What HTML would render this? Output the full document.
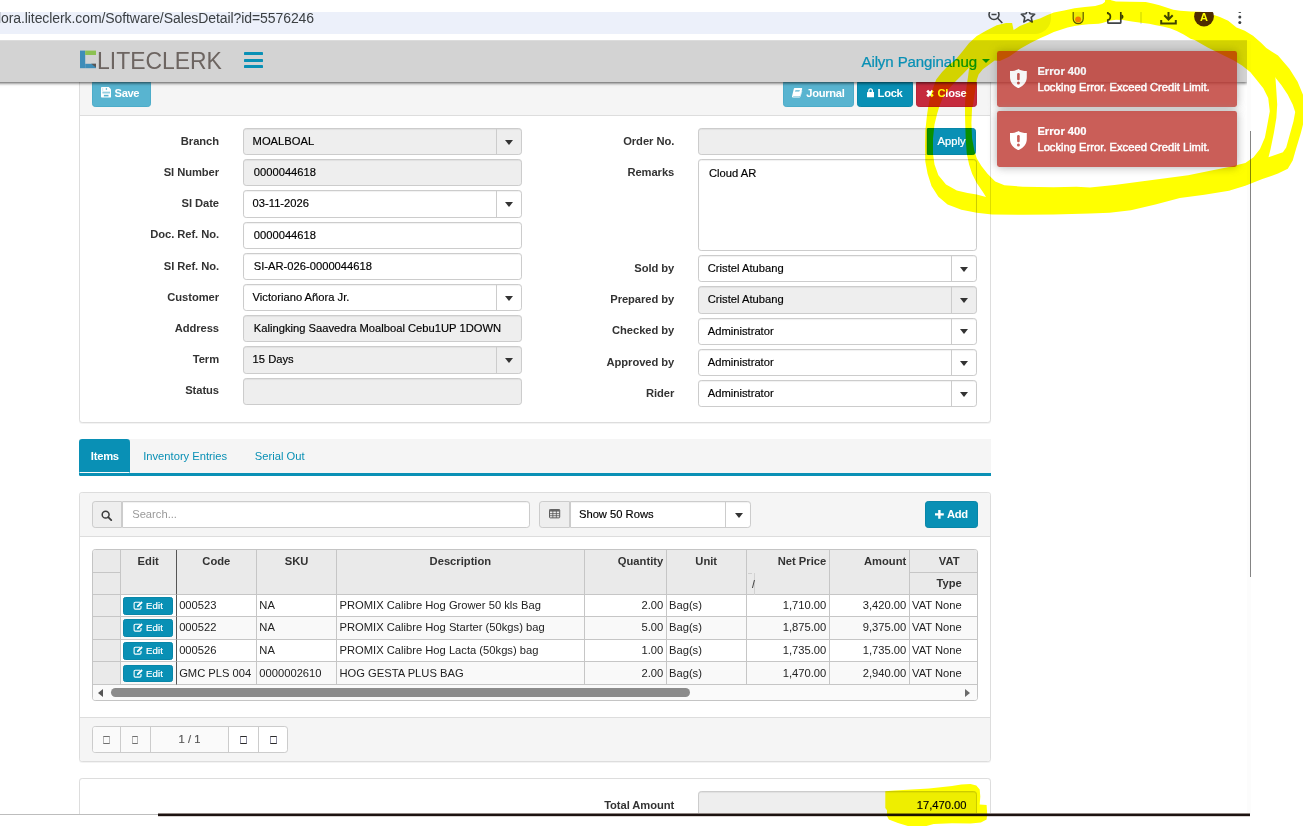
<!DOCTYPE html>
<html lang="en">
<head>
<meta charset="utf-8">
<title>Sales Detail</title>
<style>
*{box-sizing:border-box}
html,body{margin:0;padding:0;background:#fff}
body{width:1303px;height:826px;position:relative;overflow:hidden;font-family:"Liberation Sans",sans-serif}
/* ---------- browser chrome strip ---------- */
#chrome{position:absolute;left:0;top:0;width:1303px;height:41px;background:#fff;overflow:hidden}
#pill{position:absolute;left:-30px;top:12px;width:1081px;height:22px;background:#ecf0fa;border-radius:0 0 16px 0}
#url{position:absolute;left:-2px;top:9px;font-size:14px;line-height:18px;color:#3c4043;white-space:nowrap;letter-spacing:-.085px}
#chrome svg{position:absolute;overflow:visible}
/* ---------- app (80% zoom) ---------- */
#clip{position:absolute;z-index:0;left:0;top:41px;width:1247px;height:773px;overflow:hidden;background:#fff}
#app{zoom:.8;position:absolute;left:0;top:0;width:1558.75px;height:967px;font-size:14px;line-height:1.42857;color:#333}
#nav{position:absolute;left:-20px;top:0;width:1578.75px;height:51px;background:#d3d3d3;box-shadow:0 1px 4px rgba(0,0,0,.7);z-index:5}
#logo{position:absolute;left:119.5px;top:10.5px;height:26px}
#brand{position:absolute;left:141px;top:4.5px;font-size:31px;line-height:40px;color:#6d6561;letter-spacing:0;-webkit-text-stroke:.9px #d3d3d3;paint-order:stroke fill;white-space:nowrap;transform-origin:0 50%;transform:scaleX(.925)}
#bars{position:absolute;left:324.5px;top:14px;width:24.5px}
#bars i{display:block;height:4px;background:#0990b5;margin-bottom:4px;border-radius:.5px}
#user{position:absolute;right:337.6px;top:14px;font-size:18.8px;line-height:26px;color:#0990b5;white-space:nowrap;-webkit-text-stroke:.3px #0990b5;letter-spacing:-.12px}
#caret{position:absolute;left:1247.1px;top:22.5px;width:0;height:0;border:5.3px solid transparent;border-top:6.1px solid #0990b5;border-bottom:0}
.wrap{position:absolute;left:98.75px;width:1140px}
.panel{background:#fff;border:1px solid #ddd;border-radius:4px;box-shadow:0 1px 1px rgba(0,0,0,.05)}
.ph{background:#f5f5f5;border-bottom:1px solid #ddd;padding:10px 15px;height:55px;border-radius:3px 3px 0 0;position:relative}
.pf{background:#f5f5f5;border-top:1px solid #ddd;padding:10px 15px;height:55px;border-radius:0 0 3px 3px}
.btn{display:inline-block;height:34px;padding:5px 12px 7px;font-size:14px;line-height:20px;font-weight:bold;color:#fff;border:1px solid transparent;border-radius:4px;white-space:nowrap;vertical-align:top}
.btn svg{display:inline-block;vertical-align:-1px;margin-right:1px}
.b-info{background:#58b4d0;border-color:#4cacc9}
.b-pri{background:#0990b5;border-color:#0886a8}
.b-dan{background:#c52a3d;border-color:#b82438}
.right{position:absolute;right:15px;top:10px}
.right .btn{margin-left:4px;padding-left:0;padding-right:0;text-align:center;letter-spacing:-.4px}
/* form */
.col{position:absolute;top:15px;width:569px}
.fg{height:34px;margin-bottom:5px;position:relative}
.fg label{position:absolute;left:0;top:0;width:173.8px;padding-top:6px;text-align:right;font-weight:bold;line-height:20px;letter-spacing:-.08px;white-space:nowrap}
.fc{position:absolute;left:204px;top:0;width:348.4px;height:34px;border:1px solid #ccc;border-radius:4px;background:#fff;box-shadow:inset 0 1px 1px rgba(0,0,0,.075);padding:5px 12px 7px;line-height:20px;color:#000;-webkit-text-stroke:.2px #000;white-space:nowrap;overflow:hidden}
.fc.dis{background:#eee}
.fc.cb{padding-right:44px;padding-left:10.5px}
.fc.cb:after{content:"";position:absolute;right:0;top:0;width:30.5px;height:32px;border-left:1px solid #ccc}
.fc.cb:before{content:"";position:absolute;right:9.7px;top:13.5px;border:5.3px solid transparent;border-top:6.3px solid #333;border-bottom:0}

/* tabs */
#tabs{top:497.5px;height:46.4px;background:#f5f5f5}
#tabs:after{content:"";position:absolute;left:0;top:42.2px;width:100%;height:4.300px;background:#0990b5;border-radius:0 0 0 2px}
#tabs span{position:absolute;top:0;height:42.5px;padding:10px 15px;line-height:20px;border:1px solid transparent;color:#0990b5;white-space:nowrap}
#tabs span.act{left:0;width:63.5px;padding-left:13.5px;padding-right:0;background:#0990b5;color:#fff;font-weight:bold;border-radius:4px 4px 0 0;border-bottom-color:#fafafa;letter-spacing:-.3px}
/* panel 2 */
.ig{position:absolute;top:10px;height:34px}
.ad{position:absolute;left:0;top:0;height:34px;width:38px;background:#eee;border:1px solid #ccc;border-radius:4px 0 0 4px}
.ad svg{position:absolute;left:10.500px;top:10px}
.ig .fc{left:37px;border-radius:0 4px 4px 0}
#grid{position:absolute;left:15px;top:15px;width:1108px;height:190px;border:1px solid #c4c4c4;border-radius:4px;overflow:hidden;background:#fff;color:#222}
#grid .c{position:absolute;height:28px;border-right:1px solid #c6c6c6;border-bottom:1px solid #c6c6c6;padding:3px;line-height:21px;white-space:nowrap;overflow:hidden}
#grid .h{background:#eaeaea;font-weight:bold;text-align:center;color:#333}
#grid .r{text-align:right}
#grid .alt{background:#f9f9f9}
#grid .eb{display:block;height:22px;background:#0990b5;border:1px solid #0886a8;border-radius:3px;color:#fff;font-size:12px;line-height:19px;text-align:center;letter-spacing:.15px;-webkit-text-stroke:.25px #fff;padding-right:0}
#grid .eb svg{vertical-align:-1px;margin-right:3px}
#sb{position:absolute;left:0;top:168.5px;width:1106px;height:20px;background:#fafafa}
#sb i{position:absolute;left:23px;top:4px;width:723px;height:11px;border-radius:6px;background:#8b8b8b}
#sb:before{content:"";position:absolute;left:6px;top:4.500px;border:5.500px solid transparent;border-right:7px solid #555;border-left:0}
#sb:after{content:"";position:absolute;right:10px;top:4.500px;border:5.500px solid transparent;border-left:7px solid #6a6a6a;border-right:0}
.pg{position:absolute;left:15px;top:10px;height:34px;width:245px;border:1px solid #ccc;border-radius:4px;background:#fff;overflow:hidden}
.pg span{position:absolute;top:0;height:32px;border-right:1px solid #ccc;text-align:center;line-height:32px;color:#555}
.pg span.d{background:#fafafa;color:#555;-webkit-text-stroke:.2px #555}
.pg i{display:inline-block;width:8px;height:10px;border:1px solid;border-color:#2a2a2a #8c8ca0;vertical-align:-1px}
.pg .d i{border-color:#707070 #b4b4b4}
/* toasts */
.toast{position:absolute;right:12px;width:300px;height:70px;-webkit-text-stroke:.3px #fff;background:#bd362f;opacity:.8;border-radius:3px;box-shadow:0 0 12px #999;color:#fff;padding:15px 15px 15px 50px;line-height:20px;z-index:9;white-space:nowrap}
.toast b{display:block}
.toast span{-webkit-text-stroke:.55px #fff}
.toast+.toast svg{top:24px}
.toast svg{position:absolute;left:15.5px;top:22.5px}
</style>
</head>
<body>
<div id="chrome">
  <div id="pill"></div>

  <svg style="left:0;top:0" width="1303" height="41" viewBox="0 0 1303 41"><g fill="none" stroke="#3f4346" stroke-width="1.600">
    <circle cx="994" cy="14.500" r="5"/><path d="M991.500 14.500h5M997.700 18.200l4.600 4.800" />
    <path d="M1028 9.400l2 4.300 4.700.5-3.500 3.200 1 4.600-4.200-2.400-4.200 2.400 1-4.600-3.500-3.200 4.700-.5z" stroke-linejoin="round"/>
    <path d="M1073.200 9v9.700a5 5 0 0 0 10 0V9" stroke="#5a5a50" stroke-width="1.200" fill="#ececec"/>
    <path d="M1107.800 10v3.400c1.600.3 2.600 1.500 2.600 3.300s-1 3-2.600 3.300v2.200c0 .6.400 1 1 1h11c.6 0 1-.4 1-1V10" stroke-width="1.700"/><path d="M1121.300 14.600a2.200 2.200 0 0 1 0 4.400z" fill="#3f4346" stroke="none"/>
    <path d="M1168.500 9v10M1164.300 15.300l4.200 4.200 4.200-4.200M1161.200 20v3.500h14.600V20" stroke-width="2"/>
  </g>
  <circle cx="1078.100" cy="19.400" r="3" fill="#f57c00"/>
  <rect x="1140.500" y="12" width="1" height="12" fill="#c9d4ea"/>
  <circle cx="1204" cy="16.600" r="9.900" fill="#4e2c05"/>
  <text x="1204" y="20.500" text-anchor="middle" font-family="Liberation Sans, sans-serif" font-weight="bold" font-size="11" fill="#fff">A</text>
  <circle cx="1239.800" cy="11.600" r="1.500" fill="#3f4346"/><circle cx="1239.800" cy="17" r="1.500" fill="#3f4346"/><circle cx="1239.800" cy="22.400" r="1.500" fill="#3f4346"/>
  <rect x="985" y="0" width="280" height="12" fill="#fff"/>
  </svg>
  <div style="position:absolute;left:0;top:40px;width:1247px;height:1px;background:#dcdcdc"></div>
  <div id="url">lora.liteclerk.com/Software/SalesDetail?id=5576246</div>
</div>

<div id="clip"><div id="app">
  <div id="nav">
    <svg id="logo" viewBox="0 0 21 26" width="21" height="26"><rect x="0" y="2" width="6.5" height="22" fill="#3f8db8"/><rect x="6.5" y="2" width="14.5" height="5.5" fill="#8cc152"/><path d="M6.5 18.5H21V24H6.5z" fill="#3f8db8"/><path d="M21 18.5V24L14 18.5z" fill="#5b5552"/></svg>
    <div id="brand">LITECLERK</div>
    <div id="bars"><i></i><i></i><i></i></div>
    <div id="user">Ailyn Panginahug</div><div id="caret"></div>
  </div>

  <!-- PANEL 1 -->
  <div class="wrap panel" id="p1" style="top:37.5px;height:439.5px">
    <div class="ph">
      <span class="btn b-info" style="width:73.7px;padding-left:0;padding-right:4px;text-align:center;letter-spacing:-.55px"><svg width="13" height="13" viewBox="0 0 13 13"><path fill="#fff" d="M.9 0h8.800L13 3.300v8.800c0 .5-.4.900-.9.900H.9c-.5 0-.9-.4-.9-.9V.9C0 .4.400 0 .9 0z"/><rect x="1.700" y="5.800" width="9.600" height="2.300" fill="#58b4d0" opacity=".65"/><rect x="3.600" y="9.800" width="5.800" height="2" fill="#58b4d0"/><rect x="6" y="1.200" width="1.600" height="2.600" fill="#58b4d0" opacity=".8"/><rect x="1.700" y="1" width="1" height="4" fill="#58b4d0" opacity=".35"/></svg> Save</span>
      <div class="right" style="right:16.700px">
        <span class="btn b-info" style="width:88.4px"><svg width="13" height="12" viewBox="0 0 13 12"><path fill="#fff" d="M3.4 0h8.4c.7 0 1.1.6.9 1.3L10.400 9.300c-.2.7-.9 1.200-1.600 1.200H1.700c-.2 0-.3.100-.3.300 0 .3.300.4.600.4h7.400c.4 0 .700-.2.800-.6l2.300-7.600c.3.2.4.700.3 1.100L10.600 11c-.2.600-.8 1-1.400 1H1.600C.7 12 0 11.300 0 10.500c0-.3.100-.5.200-.8L2.300.9C2.500.3 2.900 0 3.400 0zm.9 2.600l-.2.700h5.500l.2-.7zm-.500 1.700l-.2.700h5.500l.2-.7z"/></svg> Journal</span><span class="btn b-pri" style="width:70px;margin-left:3.600px"><svg width="9" height="12" viewBox="0 0 9 12"><path fill="#fff" d="M1.500 5V3.500C1.500 1.600 2.800.3 4.500.3s3 1.300 3 3.200V5h.7c.4 0 .8.400.8.800v5c0 .5-.4.900-.8.900H.8c-.4 0-.8-.4-.8-.9v-5c0-.4.400-.8.800-.8zm1.600 0h2.800V3.500c0-1-.6-1.600-1.400-1.600s-1.400.6-1.400 1.600z"/></svg> Lock</span><span class="btn b-dan" style="width:76px"><svg width="10" height="11" viewBox="0 0 10 11"><path stroke="#fff" stroke-width="3.300" d="M1.500 2l7 7M8.500 2l-7 7"/></svg> Close</span>
      </div>
    </div>
    <div id="body1" style="position:relative">
      <div class="col" style="left:0">
        <div class="fg"><label>Branch</label><div class="fc dis cb">MOALBOAL</div></div>
        <div class="fg"><label>SI Number</label><div class="fc dis">0000044618</div></div>
        <div class="fg"><label>SI Date</label><div class="fc cb">03-11-2026</div></div>
        <div class="fg"><label>Doc. Ref. No.</label><div class="fc">0000044618</div></div>
        <div class="fg"><label>SI Ref. No.</label><div class="fc">SI-AR-026-0000044618</div></div>
        <div class="fg"><label>Customer</label><div class="fc cb">Victoriano Añora Jr.</div></div>
        <div class="fg"><label>Address</label><div class="fc dis">Kalingking Saavedra Moalboal Cebu1UP 1DOWN</div></div>
        <div class="fg"><label>Term</label><div class="fc dis cb">15 Days</div></div>
        <div class="fg"><label>Status</label><div class="fc dis"></div></div>
      </div>
      <div class="col" style="left:569px">
        <div class="fg"><label>Order No.</label><div class="fc dis" style="border-radius:4px 0 0 4px;width:285.500px"></div><span class="btn b-pri" style="position:absolute;right:17.500px;top:0;width:62px;text-align:center;border-radius:0 4px 4px 0;font-weight:normal;-webkit-text-stroke:.3px #fff;padding:5px 0 7px">Apply</span></div>
        <div class="fg" style="height:115px"><label>Remarks</label><div class="fc" style="height:115px;padding-top:6.500px">Cloud AR</div></div>
        <div class="fg"><label>Sold by</label><div class="fc cb">Cristel Atubang</div></div>
        <div class="fg"><label>Prepared by</label><div class="fc dis cb">Cristel Atubang</div></div>
        <div class="fg"><label>Checked by</label><div class="fc cb">Administrator</div></div>
        <div class="fg"><label>Approved by</label><div class="fc cb">Administrator</div></div>
        <div class="fg"><label>Rider</label><div class="fc cb">Administrator</div></div>
      </div>
    </div>
  </div>

  <!-- TABS -->
  <div class="wrap" id="tabs"><span class="act">Items</span><span style="left:64px">Inventory Entries</span><span style="left:203.500px">Serial Out</span></div>

  <!-- PANEL 2 -->
  <div class="wrap panel" id="p2" style="top:564px;height:337px">
    <div class="ph">
      <div class="ig" style="left:15px;width:547px"><div class="ad"><svg width="14" height="14" viewBox="0 0 14 14"><circle cx="5.800" cy="5.800" r="4.300" fill="none" stroke="#3c3c3c" stroke-width="1.900"/><path d="M9 9l3.800 3.800" stroke="#3c3c3c" stroke-width="2.200" stroke-linecap="round"/></svg></div><div class="fc" style="width:510px;color:#999;-webkit-text-stroke:0">Search...</div></div>
      <div class="ig" style="left:574px;width:266px"><div class="ad" style="width:39px"><svg style="top:9px;left:11.500px" width="14" height="12" viewBox="0 0 14 12"><rect x=".6" y=".6" width="12.800" height="10.500" rx="1" fill="none" stroke="#555" stroke-width="1.200"/><rect x=".6" y=".6" width="12.800" height="2.600" fill="#666"/><path d="M.6 5.800h12.800M.6 8.400h12.800M4.800 2v9M9.200 2v9" stroke="#555" stroke-width="1"/></svg></div><div class="fc cb" style="left:38px;width:227.300px">Show 50 Rows</div></div>
      <div class="right"><span class="btn b-pri" style="padding:5px 0 7px;width:66.500px;text-align:center;letter-spacing:-.3px"><svg width="11" height="11" viewBox="0 0 11 11"><path d="M5.500 0v11M0 5.500h11" stroke="#fff" stroke-width="3"/></svg> Add</span></div>
    </div>
    <div style="position:relative;height:225px">
      <div id="grid">
        <div class="c h" style="left:0.0px;top:0px;width:34.5px;height:28.0px;"></div>
        <div class="c h" style="left:0.0px;top:28.0px;width:34.5px;height:27.5px;"></div>
        <div class="c h" style="left:34.5px;top:0px;width:70.2px;height:55.5px;border-right-color:#555;">Edit</div>
        <div class="c h" style="left:104.7px;top:0px;width:100.2px;height:55.5px;">Code</div>
        <div class="c h" style="left:204.9px;top:0px;width:100.2px;height:55.5px;">SKU</div>
        <div class="c h" style="left:305.1px;top:0px;width:309.5px;height:55.5px;">Description</div>
        <div class="c h r" style="left:614.6px;top:0px;width:102.4px;height:55.5px;">Quantity</div>
        <div class="c h" style="left:717.0px;top:0px;width:100.2px;height:55.5px;">Unit</div>
        <div class="c h r" style="left:817.2px;top:0px;width:103.6px;height:55.5px;">Net Price</div>
        <div class="c h r" style="left:920.8px;top:0px;width:100.0px;height:55.5px;">Amount</div>
        <div class="c h" style="left:1020.8px;top:0px;width:100.0px;height:28.0px;">VAT</div>
        <div class="c h" style="left:1020.8px;top:28.0px;width:100.0px;height:27.5px;">Type</div>
        <div class="c h" style="left:0.0px;top:55.5px;width:34.5px;height:27.5px;"></div>
        <div class="c " style="left:34.5px;top:55.5px;width:70.2px;height:27.5px;border-right-color:#555;"><span class="eb"><svg width="13" height="11" viewBox="0 0 12 11"><path d="M8.300 1.500H2.400C1.500 1.500.9 2.100.9 3v5.600c0 .9.600 1.500 1.500 1.500H8c.9 0 1.500-.6 1.500-1.500V6.400" fill="none" stroke="#fff" stroke-width="1.400"/><path d="M4.400 7.800l.4-2.200L10 .4l1.700 1.700-5.200 5.200z" fill="#fff"/></svg>Edit</span></div>
        <div class="c " style="left:104.7px;top:55.5px;width:100.2px;height:27.5px;">000523</div>
        <div class="c " style="left:204.9px;top:55.5px;width:100.2px;height:27.5px;">NA</div>
        <div class="c " style="left:305.1px;top:55.5px;width:309.5px;height:27.5px;">PROMIX Calibre Hog Grower 50 kls Bag</div>
        <div class="c r" style="left:614.6px;top:55.5px;width:102.4px;height:27.5px;">2.00</div>
        <div class="c " style="left:717.0px;top:55.5px;width:100.2px;height:27.5px;">Bag(s)</div>
        <div class="c r" style="left:817.2px;top:55.5px;width:103.6px;height:27.5px;">1,710.00</div>
        <div class="c r" style="left:920.8px;top:55.5px;width:100.0px;height:27.5px;">3,420.00</div>
        <div class="c " style="left:1020.8px;top:55.5px;width:100.0px;height:27.5px;">VAT None</div>
        <div class="c h" style="left:0.0px;top:83px;width:34.5px;height:29.2px;"></div>
        <div class="c alt" style="left:34.5px;top:83px;width:70.2px;height:29.2px;border-right-color:#555;"><span class="eb"><svg width="13" height="11" viewBox="0 0 12 11"><path d="M8.300 1.500H2.400C1.500 1.500.9 2.100.9 3v5.600c0 .9.600 1.500 1.500 1.500H8c.9 0 1.500-.6 1.500-1.500V6.400" fill="none" stroke="#fff" stroke-width="1.400"/><path d="M4.400 7.800l.4-2.200L10 .4l1.700 1.700-5.200 5.200z" fill="#fff"/></svg>Edit</span></div>
        <div class="c alt" style="left:104.7px;top:83px;width:100.2px;height:29.2px;">000522</div>
        <div class="c alt" style="left:204.9px;top:83px;width:100.2px;height:29.2px;">NA</div>
        <div class="c alt" style="left:305.1px;top:83px;width:309.5px;height:29.2px;">PROMIX Calibre Hog Starter (50kgs) bag</div>
        <div class="c r alt" style="left:614.6px;top:83px;width:102.4px;height:29.2px;">5.00</div>
        <div class="c alt" style="left:717.0px;top:83px;width:100.2px;height:29.2px;">Bag(s)</div>
        <div class="c r alt" style="left:817.2px;top:83px;width:103.6px;height:29.2px;">1,875.00</div>
        <div class="c r alt" style="left:920.8px;top:83px;width:100.0px;height:29.2px;">9,375.00</div>
        <div class="c alt" style="left:1020.8px;top:83px;width:100.0px;height:29.2px;">VAT None</div>
        <div class="c h" style="left:0.0px;top:112.2px;width:34.5px;height:28px;"></div>
        <div class="c " style="left:34.5px;top:112.2px;width:70.2px;height:28px;border-right-color:#555;"><span class="eb"><svg width="13" height="11" viewBox="0 0 12 11"><path d="M8.300 1.500H2.400C1.500 1.500.9 2.100.9 3v5.600c0 .9.600 1.500 1.500 1.500H8c.9 0 1.500-.6 1.500-1.500V6.400" fill="none" stroke="#fff" stroke-width="1.400"/><path d="M4.400 7.800l.4-2.200L10 .4l1.700 1.700-5.200 5.200z" fill="#fff"/></svg>Edit</span></div>
        <div class="c " style="left:104.7px;top:112.2px;width:100.2px;height:28px;">000526</div>
        <div class="c " style="left:204.9px;top:112.2px;width:100.2px;height:28px;">NA</div>
        <div class="c " style="left:305.1px;top:112.2px;width:309.5px;height:28px;">PROMIX Calibre Hog Lacta (50kgs) bag</div>
        <div class="c r" style="left:614.6px;top:112.2px;width:102.4px;height:28px;">1.00</div>
        <div class="c " style="left:717.0px;top:112.2px;width:100.2px;height:28px;">Bag(s)</div>
        <div class="c r" style="left:817.2px;top:112.2px;width:103.6px;height:28px;">1,735.00</div>
        <div class="c r" style="left:920.8px;top:112.2px;width:100.0px;height:28px;">1,735.00</div>
        <div class="c " style="left:1020.8px;top:112.2px;width:100.0px;height:28px;">VAT None</div>
        <div class="c h" style="left:0.0px;top:140.2px;width:34.5px;height:28.1px;"></div>
        <div class="c alt" style="left:34.5px;top:140.2px;width:70.2px;height:28.1px;border-right-color:#555;"><span class="eb"><svg width="13" height="11" viewBox="0 0 12 11"><path d="M8.300 1.500H2.400C1.500 1.500.9 2.100.9 3v5.600c0 .9.600 1.500 1.500 1.500H8c.9 0 1.500-.6 1.500-1.500V6.400" fill="none" stroke="#fff" stroke-width="1.400"/><path d="M4.400 7.800l.4-2.200L10 .4l1.700 1.700-5.200 5.200z" fill="#fff"/></svg>Edit</span></div>
        <div class="c alt" style="left:104.7px;top:140.2px;width:100.2px;height:28.1px;">GMC PLS 004</div>
        <div class="c alt" style="left:204.9px;top:140.2px;width:100.2px;height:28.1px;">0000002610</div>
        <div class="c alt" style="left:305.1px;top:140.2px;width:309.5px;height:28.1px;">HOG GESTA PLUS BAG</div>
        <div class="c r alt" style="left:614.6px;top:140.2px;width:102.4px;height:28.1px;">2.00</div>
        <div class="c alt" style="left:717.0px;top:140.2px;width:100.2px;height:28.1px;">Bag(s)</div>
        <div class="c r alt" style="left:817.2px;top:140.2px;width:103.6px;height:28.1px;">1,470.00</div>
        <div class="c r alt" style="left:920.8px;top:140.2px;width:100.0px;height:28.1px;">2,940.00</div>
        <div class="c alt" style="left:1020.8px;top:140.2px;width:100.0px;height:28.1px;">VAT None</div>
        <div style="position:absolute;left:826.500px;top:29px;width:1px;height:27px;background:#d2d2d2"></div><div style="position:absolute;left:824.500px;top:37.500px;width:1.500px;height:9.500px;background:#444;transform:skewX(-14deg)"></div><div style="position:absolute;left:819px;top:29px;width:5px;height:1px;background:#cfcfcf"></div>
        <div id="sb"><i></i></div>
      </div>
    </div>
    <div class="pf" style="position:relative"><div class="pg"><span class="d" style="left:0;width:35px"><i></i></span><span class="d" style="left:35px;width:37px"><i></i></span><span class="d" style="left:72px;width:98.500px">1 / 1</span><span style="left:170.500px;width:36.500px"><i></i></span><span style="left:207px;width:37px;border-right:0"><i></i></span></div></div>
  </div>

  <!-- PANEL 3 -->
  <div class="wrap panel" id="p3" style="top:921.500px;height:120px">
    <div style="position:relative">
      <div class="col" style="left:569px"><div class="fg"><label style="padding-top:7px">Total Amount</label><div class="fc dis" style="text-align:right;padding-top:6px">17,470.00</div></div></div>
    </div>
  </div>

  <!-- TOASTS -->
  <div class="toast" style="top:12px"><svg width="21" height="24" viewBox="0 0 22 24" preserveAspectRatio="none"><path fill="#fff" d="M11 0C8 1.800 4.500 2.600 0 2.600V10c0 6.500 4.200 11.200 11 14 6.800-2.800 11-7.500 11-14V2.600C17.500 2.600 14 1.800 11 0z"/><rect x="9.300" y="5" width="3.400" height="9" rx="1.500" fill="#bd362f"/><circle cx="11" cy="17.600" r="1.900" fill="#bd362f"/></svg><b>Error 400</b><span>Locking Error. Exceed Credit Limit.</span></div>
  <div class="toast" style="top:88px"><svg width="21" height="24" viewBox="0 0 22 24" preserveAspectRatio="none"><path fill="#fff" d="M11 0C8 1.800 4.500 2.600 0 2.600V10c0 6.500 4.200 11.200 11 14 6.800-2.800 11-7.500 11-14V2.600C17.500 2.600 14 1.800 11 0z"/><rect x="9.300" y="5" width="3.400" height="9" rx="1.500" fill="#bd362f"/><circle cx="11" cy="17.600" r="1.900" fill="#bd362f"/></svg><b>Error 400</b><span>Locking Error. Exceed Credit Limit.</span></div>

</div></div>

<!-- stray capture lines -->
<div style="position:absolute;left:1250px;top:51px;width:1px;height:1px;background:#777"></div>
<div style="position:absolute;left:1247px;top:41px;width:4px;height:773px;background:#fcfcfc"></div>
<div style="position:absolute;left:1250px;top:131px;width:1px;height:446px;background:#848484"></div>
<div style="position:absolute;left:0;top:814px;width:158px;height:1px;background:#bdbdbd"></div>
<div style="position:absolute;left:158px;top:813px;width:1092px;height:4px;background:linear-gradient(#8f8683 0,#8f8683 25%,#1c1210 25%,#1c1210 75%,#d8d3d1 75%,#d8d3d1 100%)"></div>
<!-- highlighter annotation -->
<svg id="hl" width="384" height="222" viewBox="920 0 384 222" style="position:absolute;z-index:50;left:920px;top:0;mix-blend-mode:multiply;pointer-events:none">
<path fill="#ffff00" fill-rule="evenodd" d="M1105.3,-1.0 1104.9,2.1 1102.2,4.1 1095.2,5.9 1084.9,6.9 1074.5,8.3 1064.2,10.4 1053.8,12.4 1046.9,15.2 1040.0,18.6 1034.0,20.3 1027.4,23.0 1019.8,26.1 1013.6,29.9 1012.1,23.0 1006.0,23.0 996.7,25.3 986.0,30.7 976.8,36.1 969.1,43.0 963.0,50.7 955.3,59.9 948.9,65.1 942.1,71.9 936.2,79.5 932.8,88.8 929.8,99.0 928.1,107.5 926.9,116.0 926.0,124.4 925.3,130.7 925.0,146.0 925.3,161.4 927.6,173.7 931.5,186.0 938.4,196.7 947.6,204.4 961.4,209.7 976.7,212.8 992.1,214.4 1022.8,214.8 1053.5,214.4 1090.0,213.6 1109.6,212.8 1130.9,210.3 1155.4,204.6 1179.9,198.1 1204.4,194.8 1229.0,190.7 1245.3,185.8 1261.7,179.3 1278.0,173.6 1287.8,168.7 1292.7,160.5 1296.0,149.0 1300.9,132.7 1303.0,124.5 1312.0,110.0 1303.0,94.8 1297.6,81.7 1289.4,68.7 1278.0,55.6 1266.3,48.0 1261.3,43.1 1253.0,35.7 1244.8,30.7 1236.5,27.4 1228.2,20.7 1219.9,17.0 1214.1,14.9 1201.0,11.7 1190.6,11.4 1180.2,10.7 1173.3,9.7 1166.4,7.6 1159.5,5.2 1152.6,3.5 1145.7,2.1 1130.0,1.7 1116.0,1.4 1111.1,0.3 1110.0,-1.0ZM1088.3,24.2 1098.7,23.8 1102.2,23.1 1105.6,22.1 1109.1,20.7 1116.0,19.7 1122.9,20.0 1131.9,21.4 1140.9,22.8 1149.2,23.8 1156.1,25.2 1163.0,26.6 1169.9,28.3 1176.8,31.1 1183.7,34.5 1190.6,38.7 1194.6,39.9 1207.7,47.4 1220.8,53.9 1233.9,60.5 1242.0,65.4 1250.2,71.9 1256.7,80.1 1263.3,88.3 1268.2,98.1 1269.8,111.2 1267.4,124.5 1264.9,137.6 1260.0,149.0 1253.5,157.2 1245.3,162.9 1229.0,167.0 1212.6,170.3 1188.1,175.2 1163.6,178.5 1139.0,181.7 1114.5,185.0 1090.0,187.5 1076.5,186.7 1053.5,187.2 1022.8,186.7 1004.4,185.2 995.2,181.4 987.5,173.7 981.4,166.0 976.7,158.3 974.4,150.7 972.1,138.4 971.4,123.0 972.1,107.7 973.1,105.0 974.3,96.4 975.6,88.0 976.9,79.5 978.6,74.4 982.8,69.3 989.6,64.2 994.7,60.5 999.8,61.0 1009.0,56.8 1019.8,49.1 1030.5,43.0 1040.0,38.3 1046.9,35.2 1053.8,32.1 1060.7,29.7 1067.6,27.6 1074.5,25.9 1081.4,24.9ZM969.2,67.6 962.5,74.4 955.7,81.2 948.9,88.8 943.0,97.3 939.6,105.8 937.0,114.2 934.5,124.4 933.0,138.4 933.0,153.7 934.5,164.5 938.4,175.2 946.0,184.4 956.8,190.6 967.5,192.9 976.7,194.4 986.0,197.0 982.9,192.1 976.7,182.9 972.1,173.7 969.1,164.5 966.8,153.7 965.7,138.4 965.2,123.0 965.0,114.2 965.0,105.8 965.4,95.6 966.7,85.4 968.0,77.0ZM1274.7,76.8 1275.5,78.5 1276.4,91.5 1277.2,104.6 1276.4,117.7 1273.9,132.7 1270.6,149.0 1268.5,157.2 1282.9,152.3 1286.2,147.4 1290.3,132.7 1293.5,121.3 1295.2,112.0 1292.7,104.6 1287.8,94.8 1281.3,85.0Z"/>
</svg>
<svg id="hl2" width="112" height="46" viewBox="880 780 112 46" style="position:absolute;z-index:50;left:880px;top:780px;mix-blend-mode:multiply;pointer-events:none">
<path fill="#ffff00" d="M885.3,791.3 894.5,790.5 911.8,789.6 929.0,788.4 940.6,787.3 952.0,786.1 961.3,784.4 970.5,784.0 976.3,785.5 979.7,789.6 980.3,796.5 979.7,804.5 986.6,805.1 987.2,813.7 986.6,819.5 980.9,822.4 970.5,823.5 952.0,823.2 933.7,824.1 924.5,826.5 909.5,826.5 898.0,823.0 888.8,819.5 887.0,816.0 887.0,810.3 885.3,808.0Z"/>
</svg><!--/hl-->

</body>
</html>
